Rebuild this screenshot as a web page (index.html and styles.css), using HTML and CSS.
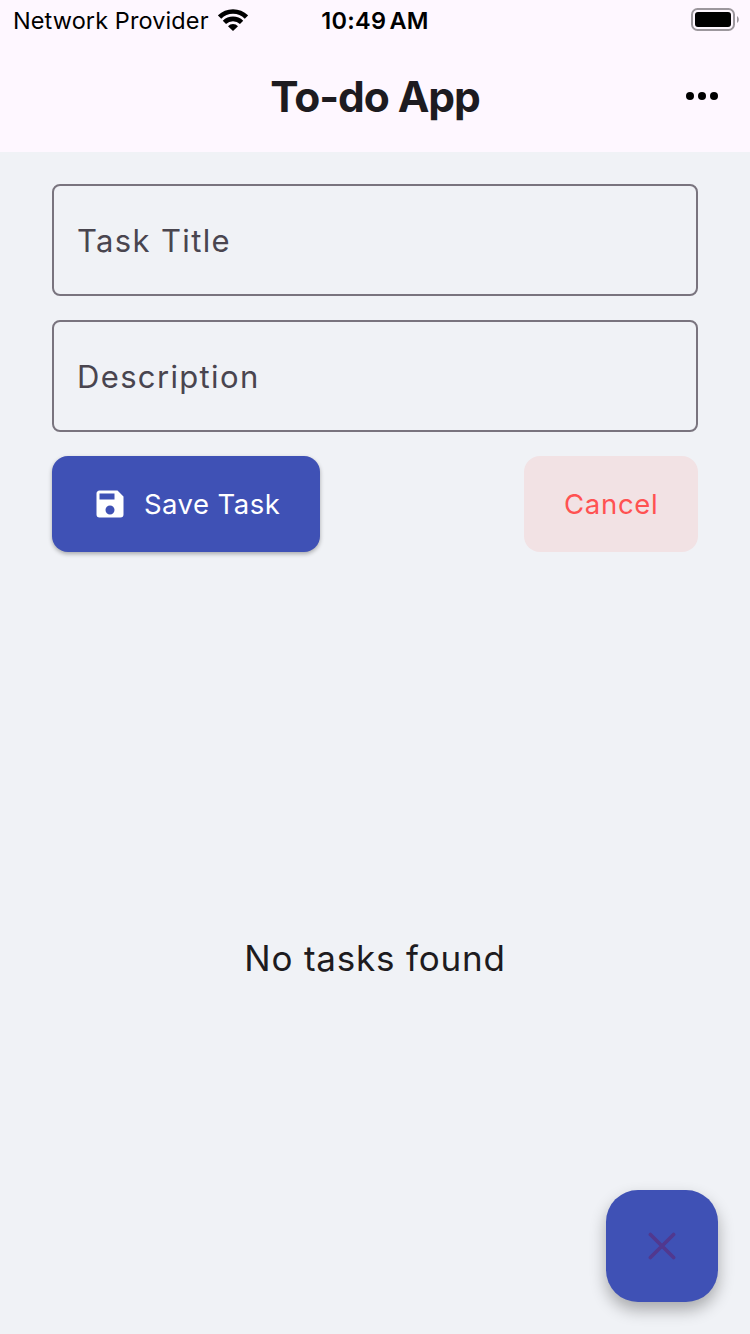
FILE: index.html
```html
<!DOCTYPE html>
<html lang="en">
<head>
<meta charset="utf-8">
<title>To-do App</title>
<link rel="stylesheet" href="styles.css">
</head>
<body>
<div class="screen">
  <div class="status">
    <div class="carrier">
      <span class="carrier-name">Network Provider</span>
      <svg class="wifi" viewBox="0 0 30 22" width="30" height="22">
        <g fill="none" stroke="#000" stroke-width="4.6">
          <path d="M1.6 8A19 19 0 0 1 28.4 8"/>
          <path d="M6.4 13.4A12.2 12.2 0 0 1 23.6 13.4"/>
        </g>
        <path d="M10 17.3A6.8 6.8 0 0 1 20 17.3L15 22Z"/>
      </svg>
    </div>
    <div class="clock">10:49<span class="meridiem">AM</span></div>
    <div class="power">
      <svg width="49" height="24" viewBox="0 0 49 24">
        <rect x="1" y="1" width="42" height="21" rx="5.5" fill="none" stroke="#9c979d" stroke-width="2"/>
        <rect x="4" y="4" width="36" height="15" rx="3" fill="#000"/>
        <path d="M46 8C48.4 9.4 48.4 13.6 46 15Z" fill="#9c979d"/>
      </svg>
    </div>
  </div>
  <header class="appbar">
    <h1 class="title">To-do App</h1>
    <button class="more" aria-label="More">
      <svg width="32" height="8" viewBox="0 0 32 8"><circle cx="4" cy="4" r="4"/><circle cx="16" cy="4" r="4"/><circle cx="28" cy="4" r="4"/></svg>
    </button>
  </header>
  <main class="content">
    <div class="field"><span class="label">Task Title</span></div>
    <div class="field"><span class="label">Description</span></div>
    <div class="actions">
      <button class="btn save">
        <svg class="save-icon" width="36" height="36" viewBox="0 0 24 24"><path fill="#fff" d="M15 9H5V5H15M12 19A3 3 0 0 1 9 16A3 3 0 0 1 12 13A3 3 0 0 1 15 16A3 3 0 0 1 12 19M17 3H5C3.89 3 3 3.9 3 5V19A2 2 0 0 0 5 21H19A2 2 0 0 0 21 19V7L17 3Z"/></svg>
        <span class="save-text">Save Task</span>
      </button>
      <button class="btn cancel"><span class="cancel-text">Cancel</span></button>
    </div>
    <p class="empty">No tasks found</p>
  </main>
  <button class="fab" aria-label="Close">
    <svg width="28" height="28" viewBox="0 0 28 28"><path d="M2.4 2.4L25.6 25.6M25.6 2.4L2.4 25.6" fill="none" stroke="#51388f" stroke-width="3.6" stroke-linecap="round"/></svg>
  </button>
</div>
</body>
</html>
```
FILE: styles.css
```css
* { box-sizing: border-box; }
body {
  margin: 0;
  font-family: Inter, "Liberation Sans", sans-serif;
  background: #f0f2f6;
  color: #1d1b20;
}
button { font: inherit; border: 0; padding: 0; background: none; }
svg { display: block; flex: none; }
.screen {
  position: relative;
  width: 750px;
  height: 1334px;
  overflow: hidden;
  display: flex;
  flex-direction: column;
  white-space: nowrap;
}
.status {
  height: 40px;
  display: grid;
  grid-template-columns: 1fr auto 1fr;
  background: #fef7ff;
  color: #000;
  line-height: 42px;
}
.carrier { display: flex; padding-left: 13px; font-size: 23.5px; }
.carrier-name { width: 204.5px; letter-spacing: 0.1px; }
.wifi { margin-top: 9px; }
.clock { font-size: 23.5px; font-weight: 600; letter-spacing: 0.3px; }
.meridiem { margin-left: 3px; }
.power { display: flex; justify-content: flex-end; padding: 8px 10px 0 0; }
.appbar {
  height: 112px;
  display: grid;
  grid-template-columns: 1fr auto 1fr;
  background: #fef7ff;
}
.title {
  grid-column: 2;
  margin: 0;
  font-size: 42.5px;
  font-weight: 700;
  letter-spacing: -1.1px;
  line-height: 114px;
}
.more { justify-self: end; align-self: start; margin: 52px 32px 0 0; }
.content {
  flex: 1;
  padding: 32px 52px 0;
  display: flex;
  flex-direction: column;
  gap: 24px;
}
.field {
  height: 112px;
  border: 2px solid #79747e;
  border-radius: 8px;
  padding-left: 23px;
  display: flex;
  align-items: center;
}
.label { color: #49454f; font-size: 31px; letter-spacing: 1.35px; }
.actions { display: flex; justify-content: space-between; }
.btn {
  height: 96px;
  border-radius: 16px;
  display: flex;
  align-items: center;
  font-size: 27.5px;
}
.save {
  width: 268px;
  padding-left: 40px;
  gap: 16px;
  background: #3f51b5;
  color: #fff;
  box-shadow: 0 2px 4px rgba(0, 0, 0, 0.3);
}
.save-text { letter-spacing: 0.45px; }
.cancel { width: 174px; padding-left: 40px; background: #f2e2e4; color: #ff5252; }
.cancel-text { letter-spacing: 0.7px; }
.empty {
  margin: 358px 0 0;
  text-align: center;
  font-size: 35px;
  line-height: 48px;
  letter-spacing: 0.8px;
}
.fab {
  position: absolute;
  right: 32px;
  bottom: 32px;
  width: 112px;
  height: 112px;
  border-radius: 32px;
  background: #3f51b5;
  display: flex;
  align-items: center;
  justify-content: center;
  box-shadow: 0 8px 16px rgba(0, 0, 0, 0.3);
}
```
